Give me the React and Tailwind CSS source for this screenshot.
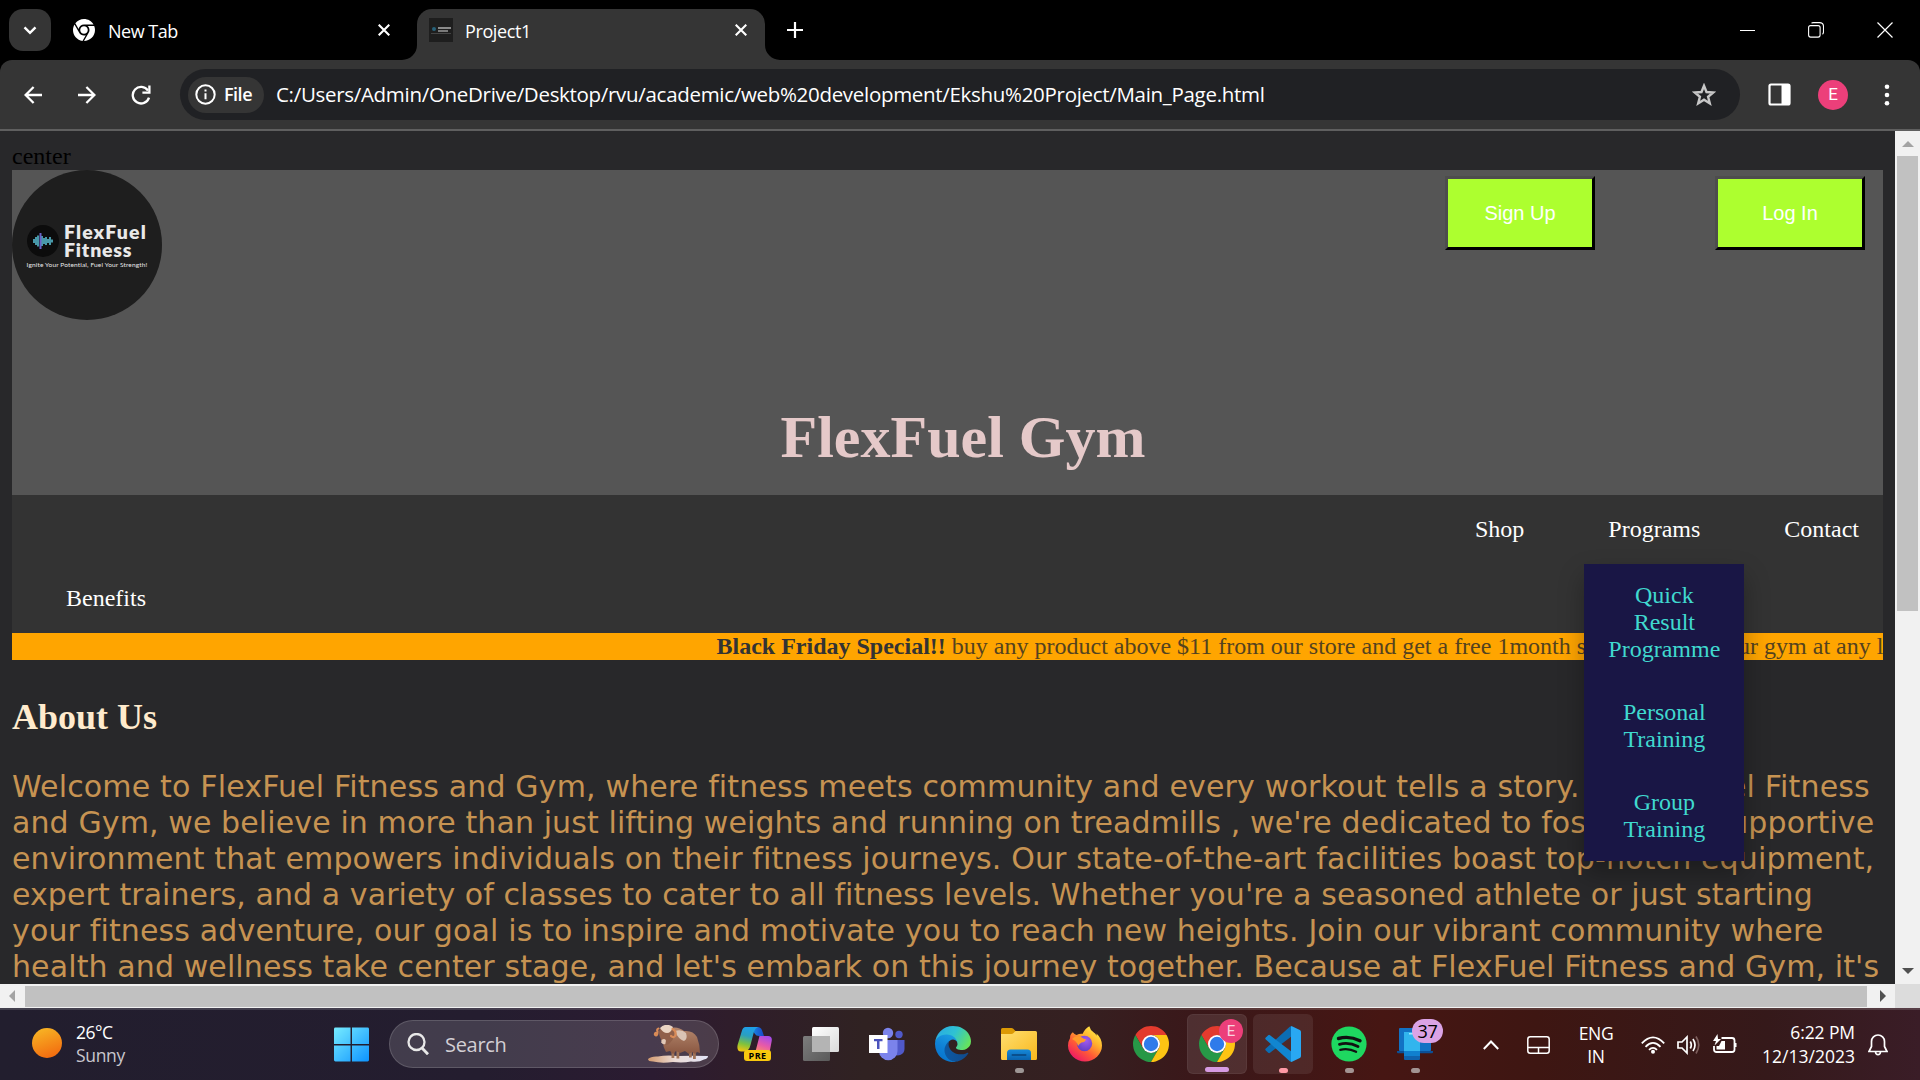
import React from 'react';
import { FaChrome } from 'react-icons/fa6';

/* ---------- small drawings ---------- */

const Close = () => (
  <svg width="12" height="12" viewBox="0 0 12 12" fill="none" stroke="#fff" strokeWidth="2.1">
    <path d="M.7.7l10.6 10.6M11.3.7L.7 11.3" />
  </svg>
);

const Arrow = ({ flip }) => (
  <svg width="18" height="18" viewBox="0 0 18 18" fill="none" stroke="#fff" strokeWidth="2.3" className={flip ? 'rotate-180' : ''}>
    <path d="M18 9H1.8M9.6 1L1.6 9l8 8" />
  </svg>
);

const Reload = () => (
  <svg width="20" height="20" viewBox="0 0 20 20" fill="none" stroke="#fff" strokeWidth="2.3">
    <path d="M17 5.6A8.3 8.3 0 1 0 18 12.6" />
    <path d="M18.4.6v7h-7" />
  </svg>
);

const ChromeLogo = ({ size = 36 }) => (
  <svg width={size} height={size} viewBox="0 0 48 48">
    <path fill="#e33b2e" d="M24 12h20.78A24 24 0 0 0 3.216 12.003L13.61 30z" />
    <path fill="#279847" d="M3.215 12.003A24 24 0 0 0 24 48l10.39-18a12 12 0 0 1-20.78 0z" />
    <path fill="#fdc413" d="M34.39 30L24 48A24 24 0 0 0 44.78 12H24a12 12 0 0 1 10.39 18z" />
    <circle cx="24" cy="24" r="12" fill="#fff" />
    <circle cx="24" cy="24" r="9.6" fill="#2f7bea" />
  </svg>
);

const Edge = () => (
  <svg width="36" height="36" viewBox="0 0 256 256">
    <defs>
      <linearGradient id="e1" x1="0" x2="1"><stop offset="0" stopColor="#0c59a4" /><stop offset="1" stopColor="#114a8b" /></linearGradient>
      <linearGradient id="e2" x1=".6" y1="0" x2=".2" y2="1"><stop offset="0" stopColor="#1b9de2" /><stop offset=".5" stopColor="#0f81d6" /><stop offset="1" stopColor="#0672cb" /></linearGradient>
      <linearGradient id="e3" x1="0" y1=".2" x2="1" y2=".6"><stop offset="0" stopColor="#29a9e4" /><stop offset=".5" stopColor="#2fc2d2" /><stop offset="1" stopColor="#66e35c" /></linearGradient>
    </defs>
    <path fill="url(#e1)" d="M231 190.5c-3.4 1.8-6.9 3.4-10.5 4.7a101.5 101.5 0 0 1-35.9 6.4c-47.3 0-88.5-32.5-88.5-74.3a31.5 31.5 0 0 1 16.4-27.3c-42.8 1.8-53.8 46.4-53.8 72.5 0 73.9 68.1 81.4 82.8 81.4 7.9 0 19.8-2.3 27-4.6l1.3-.4a128.3 128.3 0 0 0 66.6-52.8 4 4 0 0 0-5.4-5.6z" />
    <path fill="url(#e2)" d="M105.7 241.4a79.2 79.2 0 0 1-22.7-21.3 80.7 80.7 0 0 1 29.5-120c3.2-1.5 8.5-4.1 15.6-4a32.4 32.4 0 0 1 25.7 13 31.9 31.9 0 0 1 6.3 18.7c0-.2 24.5-79.6-80-79.6-43.9 0-80 41.6-80 78.2a130.2 130.2 0 0 0 12.1 56 128 128 0 0 0 156.4 67 75.5 75.5 0 0 1-62.8-8z" />
    <path fill="url(#e3)" d="M152.3 148.9c-.9 1-3.4 2.5-3.4 5.6 0 2.6 1.7 5.2 4.8 7.3 14.3 10 41.4 8.6 41.5 8.6a59.6 59.6 0 0 0 30.3-8.3 61.4 61.4 0 0 0 30.4-52.9c.3-22.4-8-37.3-11.3-43.9C223.5 23.9 177.7 0 128 0A128 128 0 0 0 0 126.2c.5-36.5 36.8-66 80-66 3.5 0 23.5.3 42 10a72.6 72.6 0 0 1 30.9 29.3c6.1 10.6 7.2 24.1 7.2 29.5s-2.7 13.3-7.8 19.9z" />
  </svg>
);

const Copilot = () => (
  <svg width="36" height="36" viewBox="0 0 36 36">
    <defs>
      <linearGradient id="c1" x1=".5" y1="0" x2=".3" y2="1"><stop offset="0" stopColor="#1e9fe8" /><stop offset=".35" stopColor="#2a9fc0" /><stop offset=".7" stopColor="#7fc23d" /><stop offset="1" stopColor="#f2c40f" /></linearGradient>
      <linearGradient id="c2" x1=".7" y1="0" x2=".3" y2="1"><stop offset="0" stopColor="#a44bea" /><stop offset=".5" stopColor="#e85aa8" /><stop offset="1" stopColor="#ff9a5a" /></linearGradient>
      <linearGradient id="c3" x1="0" y1="0" x2="1" y2="0"><stop offset="0" stopColor="#1aa0ea" /><stop offset="1" stopColor="#1846c8" /></linearGradient>
    </defs>
    <path fill="url(#c3)" d="M11 1h9.500q3.500 0 4.600 3.500L27 10h-5q-3 0-4-2L15 4z" />
    <path fill="url(#c1)" d="M8.500 1H21q-3 1-4 4.500L13.500 19Q12 25.500 7 25.500H4Q-.5 25.500.6 19L5 4.500Q6 1 8.500 1z" />
    <path fill="url(#c2)" d="M22.500 10H31q4.500 0 3.700 5L33 24q-1 4-5 4H15q3-1 4-4.500z" />
  </svg>
);

const TaskView = () => (
  <svg width="36" height="36" viewBox="0 0 36 36">
    <defs>
      <linearGradient id="t1" x1="0" y1="0" x2="1" y2="1"><stop offset="0" stopColor="#fff" /><stop offset="1" stopColor="#dadada" /></linearGradient>
      <linearGradient id="t2" x1="0" y1="0" x2="1" y2="1"><stop offset="0" stopColor="#7d7d7d" /><stop offset="1" stopColor="#5a5a5a" /></linearGradient>
    </defs>
    <rect x="0" y="10" width="27" height="25" rx="1.500" fill="url(#t2)" />
    <rect x="9" y="1" width="27" height="25" rx="1.500" fill="url(#t1)" />
    <path d="M9 10h18v16H10.500Q9 26 9 24.500z" fill="#b4b4b4" />
  </svg>
);

const Teams = () => (
  <svg width="36" height="36" viewBox="0 0 36 36">
    <circle cx="30" cy="8.500" r="3.700" fill="#5059c9" />
    <path d="M24 14h11.500v9a6.500 6.500 0 0 1-11.500 4z" fill="#5059c9" />
    <circle cx="19" cy="7" r="5.200" fill="#7b83eb" />
    <path d="M10 14h18.500v11a9.200 9.200 0 0 1-18.500 0z" fill="#7b83eb" />
    <rect x="0" y="9" width="18.500" height="18" fill="#fff" />
    <path d="M5 13h8.500v2.300h-3V23H8v-7.700H5z" fill="#4b53bc" />
  </svg>
);

const Folder = () => (
  <svg width="36" height="36" viewBox="0 0 36 36">
    <defs>
      <linearGradient id="f1" x1="0" y1="0" x2="1" y2="1"><stop offset="0" stopColor="#ffdf70" /><stop offset="1" stopColor="#f8b71c" /></linearGradient>
      <linearGradient id="f2" x1="0" y1="0" x2="0" y2="1"><stop offset="0" stopColor="#1689d9" /><stop offset="1" stopColor="#0a62ad" /></linearGradient>
    </defs>
    <path d="M0 3.500Q0 2 1.500 2h9q1 0 1.800.8L15 5.500V9H0z" fill="#dc9a05" />
    <path d="M0 8h10.500q1 0 1.800-.8L14.500 5H34.500Q36 5 36 6.500v26q0 1.500-1.500 1.500h-33Q0 34 0 32.500z" fill="url(#f1)" />
    <path d="M6 34v-7q0-3.500 3.500-3.500h17q3.500 0 3.500 3.500v7z" fill="url(#f2)" />
    <rect x="10.500" y="28" width="15" height="2" rx="1" fill="#0a4f8c" />
  </svg>
);

const Firefox = () => (
  <svg width="36" height="36" viewBox="0 0 36 36">
    <defs>
      <linearGradient id="ff1" x1=".85" y1=".05" x2=".2" y2=".95"><stop offset="0" stopColor="#fff14a" /><stop offset=".35" stopColor="#ffb02c" /><stop offset=".65" stopColor="#ff5a36" /><stop offset="1" stopColor="#ec1668" /></linearGradient>
      <radialGradient id="ff2" cx=".6" cy=".3" r=".8"><stop offset="0" stopColor="#a25bf0" /><stop offset="1" stopColor="#5b3bbf" /></radialGradient>
    </defs>
    <path fill="url(#ff1)" d="M5.800 6.200Q7.300 8.300 9.500 9q3-1.600 6.300-1.200Q17.500 3 22.300.2q1.200 4.300 4.200 6 2.200 1.300 3 3.600.2-1.300 0-2.300Q35 12.500 35 19.500a17 16 0 0 1-34 0q0-4 2-7.300 0 0 .2-2.500.8-2.200 2.600-3.500z" />
    <circle cx="17.500" cy="17.500" r="7.700" fill="url(#ff2)" />
    <path d="M5 13q4-4.500 10-1.500 1.500 1.500 4 1.700-1 3.300-4.500 3.300-2 1-3.500 3.500Q10 15 5 13z" fill="#ff9a2a" />
  </svg>
);

const VSCode = () => (
  <svg width="36" height="36" viewBox="0 0 36 36">
    <path d="M.8 24.600l2.400 2.200q.9.700 1.800 0L27 10V.5Q25.500 0 24.500 1L.8 22.500q-1.100 1 0 2.100z" fill="#0b6db3" />
    <path d="M.8 11.400l2.400-2.200q.9-.7 1.800 0L27 26v9.500Q25.500 36 24.500 35L.8 13.500q-1.100-1 0-2.100z" fill="#1186d0" />
    <path d="M26 .3q.6-.3 1.500.1l7.300 3.500q1.200.6 1.200 2v24.200q0 1.400-1.200 2l-7.300 3.500q-.9.400-1.500.1z" fill="#29a8f2" />
  </svg>
);

const Spotify = () => (
  <svg width="36" height="36" viewBox="0 0 36 36" fill="none" strokeLinecap="round" stroke="#111">
    <circle cx="18" cy="18" r="17.600" fill="#1ed760" stroke="none" />
    <path strokeWidth="3.400" d="M7.500 12.500q11-3 21.500 2.300" />
    <path strokeWidth="2.800" d="M8.500 18.300q9.500-2.500 18.500 2.300" />
    <path strokeWidth="2.300" d="M9.300 23.800q8.300-2 15.800 2" />
  </svg>
);

const PhoneLink = () => (
  <svg width="36" height="36" viewBox="0 0 36 36">
    <rect x="2" y="2" width="32" height="23" rx="1" fill="#1272c4" />
    <path d="M0 25h36v1.200q0 1-1 1H1q-1 0-1-1z" fill="#0b4f96" />
    <rect x="7" y="6" width="16" height="28" rx="1" fill="#0f62ad" />
    <rect x="7" y="6" width="16" height="19" fill="#31b5ee" />
    <rect x="7" y="25" width="16" height="5" fill="#1080cf" />
    <rect x="12" y="7" width="6" height="1.500" fill="#9be8ff" />
  </svg>
);

const Ox = () => (
  <svg width="62" height="38" viewBox="0 0 62 38">
    <defs>
      <linearGradient id="ox" x1="0" y1="0" x2="0" y2="1"><stop offset="0" stopColor="#b3866c" /><stop offset="1" stopColor="#8a5741" /></linearGradient>
      <linearGradient id="sn" x1="0" x2="1"><stop offset="0" stopColor="#d39a6e" /><stop offset=".45" stopColor="#ecdcd6" /><stop offset="1" stopColor="#e2e4f6" /></linearGradient>
    </defs>
    <path d="M1 34q3-3 10-2.500 8-1.500 20-.5 14-.5 30 0 0 2.500-4 3.500-5 3-13 2-8 1.500-18 .5-12 1.500-20-.5-5 0-5-2.500z" fill="url(#sn)" />
    <path d="M24.500 26h2.800v7h-2.800zM29.500 26h2.800v7.500h-2.800zM42 26h2.800v6.500H42zM46 26h2.800v8H46z" fill="#a17458" />
    <path d="M20 4q10-4 17 2 9-1 13 6 3 8 3 16l-3-1-2 2-3-2-3 2-4-3-5 2-4-2-3 3-3-3-4 1q-6-10-1-23z" fill="url(#ox)" />
    <path d="M28 6q7-2 11 2 2 6-2 8-6-2-9-10z" fill="#d9c3b4" />
    <path d="M13 4q4-5 10-2 7 3 3 12-3 5-6 6-5-1-7-8-2-5 0-8z" fill="#90604a" />
    <path d="M13 3q6-6 13-1-2 6-6 6t-7-5z" fill="#ead5c3" />
    <path d="M14.500 15q3-2 4.500.5l-.7 3.500q-2.800 1-4-1.500z" fill="#e2c8b6" />
    <path d="M11.500 3.500q-2 .5-1 3 0 4-1.500 4-2-.5-.5-2.500M25.500 4q4 2 3 6.500-2 3-4.500.5" fill="none" stroke="#d98b57" strokeWidth="2.200" strokeLinecap="round" />
  </svg>
);

/* ---------- browser chrome ---------- */

const TabStrip = () => (
  <div className="flex h-[60px] w-full bg-black text-white">
    <div className="ml-[9px] mt-[9px] flex h-[42px] w-[42px] items-center justify-center rounded-[14px] bg-[#353535]">
      <svg width="14" height="9" viewBox="0 0 14 9" fill="none" stroke="#fff" strokeWidth="2.400"><path d="M1.500 1.300L7 6.800l5.500-5.500" /></svg>
    </div>
    <div className="ml-[22px] flex h-[60px] w-[344px] items-center">
      <FaChrome size={22} />
      <span className="ml-[13px] w-[270px] whitespace-nowrap pt-[3px] text-[18px] tracking-[-0.5px]">New Tab</span>
      <Close />
    </div>
    <div className="relative mt-[9px] flex h-full w-[348px] items-center rounded-t-[15px] bg-[#353535]">
      <svg className="absolute -left-[15px] top-[36px]" width="15" height="15" viewBox="0 0 15 15"><path d="M15 0v15H0A15 15 0 0 0 15 0z" fill="#353535" /></svg>
      <svg className="absolute -right-[15px] top-[36px]" width="15" height="15" viewBox="0 0 15 15"><path d="M0 0v15h15A15 15 0 0 1 0 0z" fill="#353535" /></svg>
      <div className="flex h-full w-full items-start pl-3">
        <div className="mt-[9px] flex h-6 w-6 flex-col items-end justify-center bg-[#1e1e1e] pr-[2px]">
          <div className="flex items-center gap-[2px]">
            <div className="h-1 w-1 rounded-full bg-[#27627a]" />
            <div className="flex flex-col gap-px"><div className="h-[2px] w-[13px] bg-[#8a8a8a]" /><div className="h-[2px] w-[10px] bg-[#7a7a7a]" /></div>
          </div>
          <div className="mt-px h-px w-5 bg-[#444]" />
        </div>
        <span className="ml-[12px] mt-[9px] w-[270px] whitespace-nowrap text-[18px] leading-[27px] tracking-[-0.4px]">Project1</span>
        <div className="mt-[15px]"><Close /></div>
      </div>
    </div>
    <div className="ml-[22px] mt-[22px]">
      <svg width="16" height="16" viewBox="0 0 16 16" stroke="#fff" strokeWidth="2.200"><path d="M8 0v16M0 8h16" /></svg>
    </div>
    <div className="ml-auto mr-[27px] flex h-[60px] items-center">
      <svg width="15" height="15" viewBox="0 0 15 15" stroke="#fff"><path d="M0 7.500h15" /></svg>
      <svg className="ml-[53px]" width="16" height="16" viewBox="0 0 16 16" fill="none" stroke="#fff" strokeWidth="1.100"><rect x=".6" y="3.600" width="11.500" height="11.500" rx="2" /><path d="M3.500 1.300q.5-.7 2-.7h6q4 0 4 4v5q0 2-1 2.700" /></svg>
      <svg className="ml-[53px]" width="16" height="16" viewBox="0 0 16 16" stroke="#fff" strokeWidth="1.200"><path d="M.5.500l15 15M15.500.500l-15 15" /></svg>
    </div>
  </div>
);

const Toolbar = () => (
  <div className="bg-black">
    <div className="flex h-[71px] w-full items-center rounded-t-[12px] border-b-2 border-[#5f5f5f] bg-[#353535] pl-6 text-white">
      <Arrow />
      <div className="ml-9"><Arrow flip /></div>
      <div className="ml-[35px]"><Reload /></div>
      <div className="ml-[29px] flex h-[51px] w-[1560px] items-center rounded-full bg-[#202124] pl-2">
        <div className="flex h-9 w-[76px] items-center rounded-full bg-[#353535] pl-[7px]">
          <svg width="21" height="21" viewBox="0 0 21 21" fill="none" stroke="#fff" strokeWidth="2"><circle cx="10.500" cy="10.500" r="9.200" /><path d="M10.500 9.300v6M10.500 5.500v2" /></svg>
          <span className="ml-2 text-[18px] font-semibold tracking-[-0.5px]">File</span>
        </div>
        <span className="ml-3 w-[1416px] whitespace-nowrap text-[20.5px] tracking-[-0.305px]">C:/Users/Admin/OneDrive/Desktop/rvu/academic/web%20development/Ekshu%20Project/Main_Page.html</span>
        <svg width="24" height="24" viewBox="0 0 24 24" fill="none" stroke="#c7c7c7" strokeWidth="2.400"><path d="M12 2.800l2.500 6.200 6.800.5-5.200 4.300 1.700 6.600-5.800-3.700-5.800 3.700 1.700-6.600-5.200-4.300 6.800-.5z" /></svg>
      </div>
      <svg className="ml-7" width="23" height="23" viewBox="0 0 23 23"><rect x="1.500" y="1.500" width="20" height="20" rx="1.500" fill="none" stroke="#fff" strokeWidth="2.200" /><path d="M13.500 1h8v21h-8z" fill="#fff" /></svg>
      <div className="ml-[27px] flex h-[30px] w-[30px] items-center justify-center rounded-full bg-[#ec3f7a] pt-px font-[Roboto] text-[17px]">E</div>
      <svg className="ml-[36px]" width="6" height="22" viewBox="0 0 6 22" fill="#fff"><circle cx="3" cy="2.800" r="2.300" /><circle cx="3" cy="11" r="2.300" /><circle cx="3" cy="19.200" r="2.300" /></svg>
    </div>
  </div>
);

/* ---------- web page ---------- */

const Logo = () => (
  <div className="flex h-[150px] w-[150px] flex-col items-center rounded-full bg-[#1e1e1e] pt-[52px] text-[#e9e9e9]">
    <div className="flex w-[122px] items-center">
      <div className="ml-px flex h-8 w-8 shrink-0 items-center justify-center rounded-full bg-[#0c0c0c]">
        <svg width="20" height="18" viewBox="0 0 20 18" strokeWidth="1.500" stroke="#5cc6dc"><path d="M1 7v4M3 5v8M5 3.500v11M9 4v10M11 6v6M13 5v8M15 7v4M17 5v8M19 7.500v3" /><path d="M7.500 1v16" stroke="#6a63c8" strokeWidth="2" /></svg>
      </div>
      <div className="ml-[5px] whitespace-nowrap pt-px font-[Lato] text-[19.5px] font-extrabold leading-[18px]">
        <div className="tracking-[1.1px]">FlexFuel</div>
        <div className="tracking-[0.8px]">Fitness</div>
      </div>
    </div>
    <div className="mt-px whitespace-nowrap font-[Lato] text-[6.5px] leading-[9px] tracking-[0.15px]">Ignite Your Potential, Fuel Your Strength!</div>
  </div>
);

const PageButton = ({ children }) => (
  <button className="h-[74px] w-[150px] border-[3px] border-b-black border-l-[#4d4d4d] border-r-black border-t-[#4d4d4d] bg-[#adff2f] font-['Liberation_Sans'] text-[20px] text-white">{children}</button>
);

const menu = [['Quick', 'Result', 'Programme'], ['Personal', 'Training'], ['Group', 'Training']];

const Nav = () => (
  <nav className="h-[138px] bg-[#333] text-white">
    <div className="flex h-[69px] justify-end gap-[36px]">
      <div className="px-6 py-[21px]">Shop</div>
      <div className="relative px-6 py-[21px]">
        Programs
        <div className="absolute left-0 top-[69px] z-10 w-[160px] bg-[#191645] text-center text-[#40d9cf] shadow-[0_12px_24px_rgba(0,0,0,0.3)]">
          {menu.map((lines) => (
            <div key={lines[0]} className="px-6 py-[18px]">
              {lines.map((l) => <div key={l}>{l}</div>)}
            </div>
          ))}
        </div>
      </div>
      <div className="px-6 py-[21px]">Contact</div>
    </div>
    <div className="py-[21px] pl-[54px]">Benefits</div>
  </nav>
);

const About = () => (
  <section>
    <h2 className="mt-[37px] text-[36px] font-bold leading-[41px] text-[#ffebcd]">About Us</h2>
    <div className="mt-[31px] whitespace-nowrap font-['DejaVu_Sans'] text-[30px] leading-[36px] text-[#c69352]">
      <p className="tracking-[0.165px]">Welcome to FlexFuel Fitness and Gym, where fitness meets community and every workout tells a story. At FlexFuel Fitness</p>
      <p className="tracking-[0.11px]">and Gym, we believe in more than just lifting weights and running on treadmills , we're dedicated to fostering a supportive</p>
      <p className="tracking-[0.14px]">environment that empowers individuals on their fitness journeys. Our state-of-the-art facilities boast top-notch equipment,</p>
      <p className="tracking-[0.08px]">expert trainers, and a variety of classes to cater to all fitness levels. Whether you're a seasoned athlete or just starting</p>
      <p className="tracking-[0.145px]">your fitness adventure, our goal is to inspire and motivate you to reach new heights. Join our vibrant community where</p>
      <p className="tracking-[0.11px]">health and wellness take center stage, and let's embark on this journey together. Because at FlexFuel Fitness and Gym, it's</p>
    </div>
  </section>
);

const Page = () => (
  <main className="h-[853px] w-[1895px] overflow-hidden bg-[#28282a] px-3 pt-3 font-['Liberation_Serif'] text-[24px] leading-[27px]">
    <div className="text-black">center</div>
    <header className="flex h-[325px] flex-col justify-between bg-[#555]">
      <div className="flex">
        <Logo />
        <div className="ml-auto mr-[18px] mt-[6px] flex gap-[120px]">
          <PageButton>Sign Up</PageButton>
          <PageButton>Log In</PageButton>
        </div>
      </div>
      <h1 className="mb-[24px] pl-[31px] text-center text-[60px] font-bold leading-[68px] text-[#e5c9c9]">FlexFuel Gym</h1>
    </header>
    <Nav />
    <div className="h-[27px] overflow-hidden whitespace-nowrap bg-[#ffa500] pl-[704.5px] text-[#333]">
      <b>Black Friday Special!!</b> <span className="text-[#54421f]">buy any product above $11 from our store and get a free 1month subscription of our gym at any location</span>
    </div>
    <About />
  </main>
);

const VScroll = () => (
  <div className="flex h-[853px] w-[25px] flex-col items-center bg-[#f1f1f1]">
    <svg className="mt-[10px]" width="12" height="6" viewBox="0 0 12 6"><path d="M0 6l6-6 6 6z" fill="#a3a3a3" /></svg>
    <div className="mt-[9px] h-[455px] w-[21px] bg-[#c1c1c1]" />
    <svg className="mb-[10px] mt-auto" width="12" height="6" viewBox="0 0 12 6"><path d="M0 0l6 6 6-6z" fill="#505050" /></svg>
  </div>
);

const HScroll = () => (
  <div className="flex h-6 w-full">
    <div className="flex w-[1895px] items-center bg-[#f1f1f1]">
      <svg className="ml-[9px]" width="6" height="12" viewBox="0 0 6 12"><path d="M6 0L0 6l6 6z" fill="#a3a3a3" /></svg>
      <div className="ml-[10px] h-[21px] w-[1842px] bg-[#c1c1c1]" />
      <svg className="ml-[13px]" width="6" height="12" viewBox="0 0 6 12"><path d="M0 0l6 6-6 6z" fill="#505050" /></svg>
    </div>
    <div className="w-[25px] bg-[#dcdcdc]" />
  </div>
);

/* ---------- taskbar ---------- */

const Slot = ({ children, tile, mark }) => (
  <div className="flex h-[70px] w-[66px] flex-col items-center pt-1">
    <div className={`relative flex h-[60px] w-[60px] items-center justify-center rounded-[6px] ${tile || ''}`}>
      {children}
      {mark && <div className={`absolute bottom-px h-[5px] rounded-full ${mark}`} />}
    </div>
  </div>
);

const Taskbar = () => (
  <footer className="flex h-[72px] w-full border-t-2 border-white/15 bg-[linear-gradient(90deg,#221e2e_0%,#241d2f_25%,#2b1b31_34%,#2f1d2b_38%,#302222_45%,#352021_56%,#3a181a_62%,#461613_72%,#3e1612_80%,#35191a_92%,#3a1d27_100%)] text-white">
    <div className="flex w-[334px] pl-8">
      <div className="mt-[18px] h-[30px] w-[30px] rounded-full bg-[linear-gradient(160deg,#f8bb26,#f2620d)]" />
      <div className="ml-[14px] mt-[10px] text-[17.500px] leading-[24px] tracking-[-0.5px]">
        <div>26°C</div>
        <div className="-mt-px tracking-[-0.35px] text-[#c9c7cd]">Sunny</div>
      </div>
    </div>
    <svg className="mt-[17px]" width="35" height="35" viewBox="0 0 36 35">
      <defs><linearGradient id="win" x1="0" y1="0" x2="1" y2="1"><stop offset="0" stopColor="#77ecff" /><stop offset="1" stopColor="#0d93ff" /></linearGradient></defs>
      <path fill="url(#win)" d="M1.500 0H17v17H0V1.500Q0 0 1.500 0zM18.500 0h16Q36 0 36 1.500V17H18.500zM0 18.500h17V35H1.500Q0 35 0 33.500zM18.500 18.500H36v15q0 1.500-1.500 1.500h-16z" />
    </svg>
    <div className="ml-5 mt-[10px] flex h-12 w-[330px] shrink-0 items-center rounded-full border-[1.500px] border-white/15 bg-white/[0.14] pl-[17px]">
      <svg width="22" height="22" viewBox="0 0 22 22" fill="none" stroke="#e8e8e8" strokeWidth="2.300"><circle cx="9.500" cy="9" r="8" /><path d="M15 15l6 6.300" strokeWidth="2.800" /></svg>
      <span className="ml-[16px] w-[202px] shrink-0 pt-px text-[20px] tracking-[-0.300px] text-[#d3cfd4]">Search</span>
      <div className="shrink-0"><Ox /></div>
    </div>
    <div className="ml-[3px] flex">
      <Slot><Copilot /><div className="absolute left-[19px] top-[36px] flex h-[11px] w-[27px] items-center justify-center rounded-[3px] bg-[#f9c80e] text-[9px] font-bold tracking-[0.4px] text-black">PRE</div></Slot>
      <Slot><TaskView /></Slot>
      <Slot><Teams /></Slot>
      <Slot><Edge /></Slot>
      <Slot mark="w-[9px] bg-[#9d9695]"><Folder /></Slot>
      <Slot><Firefox /></Slot>
      <Slot><ChromeLogo /></Slot>
      <Slot tile="bg-white/10 border border-white/5" mark="w-6 bg-[#d69be3]">
        <ChromeLogo />
        <div className="absolute left-[31px] top-[4px] flex h-6 w-6 items-center justify-center rounded-full bg-[#ec3f7a] font-[Roboto] text-[15px] text-[#f9d2df]">E</div>
      </Slot>
      <Slot tile="bg-white/[0.08]" mark="w-[9px] bg-[#ff9aa5]"><VSCode /></Slot>
      <Slot mark="w-[9px] bg-[#a39493]"><Spotify /></Slot>
      <Slot mark="w-[9px] bg-[#a39493]">
        <PhoneLink />
        <div className="absolute left-[27px] top-[5px] flex h-6 w-[31px] items-center justify-center rounded-full bg-[#dba3e6] text-[18px] tracking-[-0.3px] text-black">37</div>
      </Slot>
    </div>
    <div className="flex h-[70px] flex-1 items-center">
      <svg className="ml-[35px]" width="16" height="10" viewBox="0 0 16 10" fill="none" stroke="#fff" strokeWidth="2"><path d="M.8 9L8 1.500 15.200 9" /></svg>
      <svg className="ml-[28px]" width="23" height="18" viewBox="0 0 23 18" fill="none" stroke="#fff" strokeWidth="1.500"><rect x=".8" y=".8" width="21.400" height="16.400" rx="2.500" /><path d="M1 11.500h21M11.500 11.500V17" /></svg>
      <div className="ml-[21px] w-[50px] text-center text-[17.500px] leading-[23px] tracking-[-0.4px]"><div>ENG</div><div>IN</div></div>
      <svg className="ml-[20px]" width="24" height="18" viewBox="0 0 24 18" fill="none" stroke="#fff" strokeWidth="1.800"><path d="M.8 7.300Q12-4.500 23.200 7.300M4.500 10.800Q12 3 19.500 10.800M8 13.800Q12 9.800 16 13.800" /><circle cx="12" cy="15.800" r="2" fill="#fff" stroke="none" /></svg>
      <svg className="ml-[12px]" width="24" height="20" viewBox="0 0 24 20" fill="none" stroke="#fff" strokeWidth="1.700"><path d="M1 7h4l5-5v16l-5-5H1zM13.300 6.500q2 3.500 0 7M16 4q4 6 0 12" /><path d="M19 1.500q5.500 8.500 0 17" stroke="#7d5f5d" /></svg>
      <svg className="mb-[2px] ml-[12px]" width="24" height="20" viewBox="0 0 24 20" fill="none" stroke="#fff" strokeWidth="1.800"><path d="M8.500 4H19q2.500 0 2.500 2.500v9Q21.500 18 19 18H3.500Q1 18 1 15.500V12" /><path d="M21.500 9h2v4h-2z" fill="#fff" stroke="none" /><path d="M8.500 7H12v8.500H3.500V12H6zM4.500 0L0 7h3L1.500 11.500 8 5H5z" fill="#fff" stroke="none" /></svg>
      <div className="mb-[3px] ml-auto text-right text-[17.500px] leading-[24px] tracking-[0.02px]"><div className="tracking-[-0.1px]">6:22 PM</div><div>12/13/2023</div></div>
      <svg className="mb-px ml-[13px] mr-[32px]" width="20" height="22" viewBox="0 0 20 22" fill="none" stroke="#fff" strokeWidth="1.700"><path d="M10 1a6.500 6.500 0 0 1 6.500 6.500v5L19 17.500H1l2.500-5v-5A6.500 6.500 0 0 1 10 1zM7.500 18q.3 2.600 2.500 2.600t2.500-2.600" /></svg>
    </div>
  </footer>
);

export default function App() {
  return (
    <div className="h-[1080px] w-[1920px] overflow-hidden bg-black font-['Open_Sans',sans-serif]">
      <TabStrip />
      <Toolbar />
      <div className="flex"><Page /><VScroll /></div>
      <HScroll />
      <Taskbar />
    </div>
  );
}
